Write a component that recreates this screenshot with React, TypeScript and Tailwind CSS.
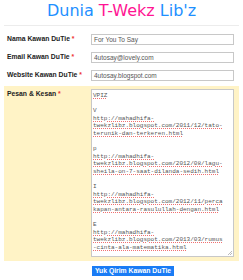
const fields = [
  { label: 'Nama Kawan DuTie', value: 'For You To Say' },
  { label: 'Email Kawan DuTie', value: '4utosay@lovely.com' },
  { label: 'Website Kawan DuTie', value: '4utosay.blogspot.com' },
];

const messageLines = [
  'VPIZ',
  '',
  'V',
  'http://mahadhifa-',
  'twekzlibz.blogspot.com/2011/12/tato-',
  'terunik-dan-terkeren.html',
  '',
  'p',
  'http://mahadhifa-',
  'twekzlibz.blogspot.com/2012/08/lagu-',
  'sheila-on-7-saat-dilanda-sedih.html',
  '',
  'I',
  'http://mahadhifa-',
  'twekzlibz.blogspot.com/2012/11/perca',
  'kapan-antara-rasulullah-dengan.html',
  '',
  'E',
  'http://mahadhifa-',
  'twekzlibz.blogspot.com/2013/03/rumus',
  '-cinta-ala-matematika.html',
];

function Label({ text }: { text: string }) {
  return (
    <>
      {text} <span className="text-[#e33]">*</span>
    </>
  );
}

export default function App() {
  return (
    <div className="w-[243px] h-[280px] bg-white overflow-hidden">
      {/* Title */}
      <h1 className="text-center font-['DejaVu_Sans',sans-serif] text-[16px] leading-[20px] pt-px">
        <span className="text-[#1e90ff]">Dunia </span>
        <span className="text-[#ff1493]">T-Wekz </span>
        <span className="text-[#1e90ff]">Lib'z</span>
      </h1>
      <div className="mx-1 mt-[4px] h-px bg-[#ececec]" />

      {/* Text fields */}
      <div className="px-1 mt-[8px] flex flex-col gap-[7px]">
        {fields.map((f) => (
          <div key={f.label} className="flex items-center h-[11px]">
            <div className="w-[87px] pl-[3px] font-['Liberation_Sans',Arial,sans-serif] text-[6.8px] leading-[8px] font-bold text-[#222] -mt-[2px]">
              <Label text={f.label} />
            </div>
            <div className="w-[143px] h-[11px] border border-[#c8c8c8] bg-white flex items-center pl-[2px] font-['Liberation_Sans',Arial,sans-serif] text-[6.5px] leading-[8px] text-[#555]">
              {f.value}
            </div>
          </div>
        ))}
      </div>

      {/* Message section */}
      <div className="mx-1 mt-[5px] h-[175px] bg-[#fff3c6] flex items-start pt-[3px]">
        <div className="w-[87px] pl-[3px] pt-[1px] font-['Liberation_Sans',Arial,sans-serif] text-[6.8px] leading-[8px] font-bold text-[#222]">
          <Label text="Pesan & Kesan" />
        </div>
        <div className="relative w-[143px] h-[168px] bg-white border border-[#c8c8c8] pl-[1px] pt-[2px] font-['Liberation_Mono',monospace] text-[6px] leading-[7.6px] text-[#555] whitespace-pre">
          {messageLines.map((line, i) => (
            <div key={i} className="h-[7.6px]">
              {line.length > 1 ? (
                <span className="underline decoration-dotted decoration-[#f07070] underline-offset-1">{line}</span>
              ) : (
                line
              )}
            </div>
          ))}
          <svg className="absolute right-0 bottom-0" width="6" height="6" viewBox="0 0 6 6">
            <path d="M5 1 L1 5 M5 3 L3 5" stroke="#aaa" strokeWidth="0.8" />
          </svg>
        </div>
      </div>

      {/* Submit */}
      <div className="pl-[92px] mt-[5px] flex">
        <button className="w-[82px] h-[10px] bg-[#1a7cf5] text-white font-['Liberation_Sans',Arial,sans-serif] font-bold text-[6.8px] leading-[10px] text-center">
          Yuk Qirim Kawan DuTie
        </button>
      </div>
    </div>
  );
}
